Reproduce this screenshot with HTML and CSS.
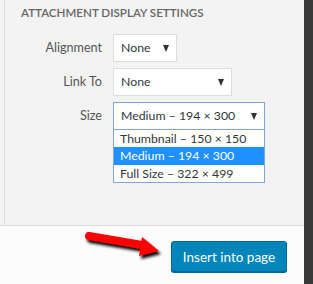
FILE: index.html
```html
<!DOCTYPE html>
<html lang="en">

<head>
    <meta charset="UTF-8">
    <title>Attachment display settings</title>
    <link rel="stylesheet" href="styles.css">
</head>

<body>
    <div class="frame">
        <div class="modal">
            <div class="settings">
                <div class="settingsInner">
                    <h2>Attachment Display Settings</h2>
                    <div class="row">
                        <span class="label">Alignment</span>
                        <div class="select small">None<span class="caret"></span></div>
                    </div>
                    <div class="row">
                        <span class="label">Link To</span>
                        <div class="select medium">None<span class="caret"></span></div>
                    </div>
                    <div class="row">
                        <span class="label">Size</span>
                        <div class="selectWrap">
                            <div class="select large focused">Medium &ndash; 194 &times; 300<span class="caret"></span></div>
                            <ul class="options">
                                <li>Thumbnail &ndash; 150 &times; 150</li>
                                <li class="selected">Medium &ndash; 194 &times; 300</li>
                                <li>Full Size &ndash; 322 &times; 499</li>
                            </ul>
                        </div>
                    </div>
                </div>
            </div>
            <div class="toolbar">
                <svg class="pointer" width="90" height="40" viewBox="0 0 90 40">
                    <defs>
                        <filter id="shade" x="-20%" y="-40%" width="140%" height="180%">
                            <feGaussianBlur in="SourceAlpha" stdDeviation="1.4" />
                            <feOffset dx="2" dy="2.5" result="blur" />
                            <feMerge>
                                <feMergeNode in="blur" />
                                <feMergeNode in="SourceGraphic" />
                            </feMerge>
                        </filter>
                    </defs>
                    <g filter="url(#shade)">
                        <line x1="9" y1="9" x2="62" y2="18" stroke="#ff0000" stroke-width="8" stroke-linecap="round" />
                        <polygon points="62,10 79,24 59,29" fill="#ff0000" />
                    </g>
                </svg>
                <button class="insert">Insert into page</button>
            </div>
        </div>
        <div class="edge"></div>
    </div>
</body>

</html>
```

FILE: styles.css
```css
body {
    margin: 0px;
    padding: 0px;
    font-family: Lato, "Noto Sans", sans-serif;
    background-color: #fcfcfc;

    .frame {
        display: flex;
        flex-direction: row;
        height: 284px;
    }

    .modal {
        flex: 1;
        display: flex;
        flex-direction: column;
    }

    .edge {
        width: 9px;
        background-color: #383838;
    }

    .settings {
        height: 225px;
        background-color: #f3f3f3;
        border-bottom: 1px solid #dddddd;
        padding-left: 4px;

        .settingsInner {
            height: 100%;
            border-left: 1px solid #dddddd;
            padding-left: 16px;
        }

        h2 {
            margin: 0px;
            padding-top: 6px;
            height: 28px;
            font-size: 11.6px;
            font-weight: 600;
            text-transform: uppercase;
            color: #666666;
        }
    }

    .row {
        display: flex;
        flex-direction: row;
        align-items: flex-start;
        margin-bottom: 6px;

        .label {
            width: 81px;
            text-align: right;
            font-size: 12.6px;
            color: #555555;
            line-height: 28px;
            margin-right: 11px;
        }
    }

    .selectWrap {
        position: relative;
    }

    .select {
        box-sizing: border-box;
        height: 28px;
        background-color: #ffffff;
        border: 1px solid #dddddd;
        font-size: 12.3px;
        color: #32373c;
        line-height: 26px;
        padding-left: 7px;
        position: relative;

        .caret {
            position: absolute;
            right: 7px;
            top: 10px;
            width: 0px;
            height: 0px;
            border-left: 3.5px solid transparent;
            border-right: 3.5px solid transparent;
            border-top: 7px solid #333333;
        }
    }

    .small {
        width: 64px;
    }

    .medium {
        width: 119px;
    }

    .large {
        width: 152px;
    }

    .focused {
        border-color: #7fa6d6;
    }

    .options {
        position: absolute;
        top: 28px;
        left: 0px;
        box-sizing: border-box;
        width: 152px;
        margin: 0px;
        padding: 0px;
        list-style: none;
        background-color: #ffffff;
        border: 1px solid #7fa6d6;
        border-top: none;

        li {
            height: 17.3px;
            line-height: 17px;
            padding-left: 6px;
            font-size: 12.3px;
            color: #32373c;
        }

        .selected {
            background-color: #1e90ff;
            color: #ffffff;
        }
    }

    .toolbar {
        flex: 1;
        display: flex;
        flex-direction: row;
        justify-content: flex-end;
        align-items: flex-start;
        padding-top: 15px;
        padding-right: 17px;
        position: relative;

        .pointer {
            position: absolute;
            left: 80px;
            top: 1px;
        }
    }

    .insert {
        height: 31px;
        width: 116px;
        background-color: #0085ba;
        border: 1px solid #006799;
        border-radius: 3px;
        box-shadow: 0px 1px 0px #006799;
        color: #ffffff;
        font-family: Lato, "Noto Sans", sans-serif;
        font-size: 13.5px;
        padding: 0px;
    }
}
```
